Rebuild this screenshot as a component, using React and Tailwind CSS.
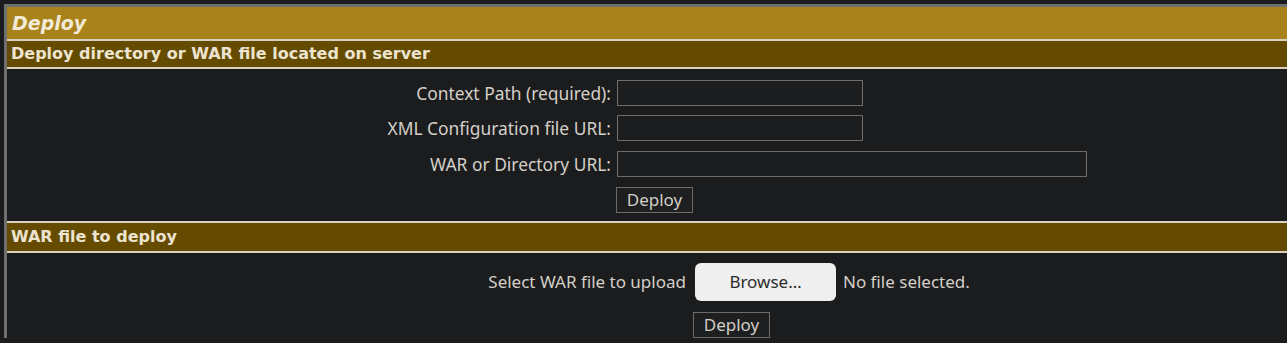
import React from "react";

function Btn({ children }) {
  return (
    <button className="h-[26px] w-[77px] border border-[#6b6b6b] bg-[#1e1f21] text-[17px] text-[#d2cec6] leading-none">
      {children}
    </button>
  );
}

function Field({ w }) {
  return <div className={`h-[26px] ${w} border border-[#6e6e6e] bg-[#1c1d1f]`} />;
}

export default function App() {
  return (
    <div className="h-[343px] w-[1287px] overflow-hidden bg-[#1b1c1e] pt-[4px] pl-[4px] [font-family:'Noto_Sans',sans-serif]">
      <div className="w-[1300px] border-l-[3px] border-t-[3px] border-[#6f6f6f] text-[#d4d0c8]">
        <div className="h-[32px] bg-[#a8821a] pl-[5px] flex items-center">
          <span className="text-[19px] font-bold italic text-[#f2ead6] [font-family:'DejaVu_Sans',sans-serif]">Deploy</span>
        </div>
        <div className="border-y-2 border-[#d8d1c1] h-[30px] bg-[#654b00] pl-[4px] flex items-center">
          <span className="text-[16px] font-bold text-[#ece4d0] [font-family:'DejaVu_Sans',sans-serif]">Deploy directory or WAR file located on server</span>
        </div>
        <div className="grid grid-cols-[604px_1fr] gap-x-[6px] pt-[11px] pb-[8px] text-[17.4px]">
          <div className="h-[26px] flex items-center justify-end">Context Path (required):</div>
          <div className="h-[26px]"><Field w="w-[246px]" /></div>
          <div className="mt-[9px] h-[26px] flex items-center justify-end">XML Configuration file URL:</div>
          <div className="mt-[9px] h-[26px]"><Field w="w-[246px]" /></div>
          <div className="mt-[10px] h-[26px] flex items-center justify-end">WAR or Directory URL:</div>
          <div className="mt-[10px] h-[26px]"><Field w="w-[470px]" /></div>
          <div className="mt-[9px]" />
          <div className="mt-[9px] -ml-[1px]"><Btn>Deploy</Btn></div>
        </div>
        <div className="border-y-2 border-[#d8d1c1] h-[32px] bg-[#654b00] pl-[4px] flex items-center">
          <span className="text-[16px] font-bold text-[#ece4d0] [font-family:'DejaVu_Sans',sans-serif]">WAR file to deploy</span>
        </div>
        <div className="grid grid-cols-[679px_1fr] gap-x-[7px] pt-[10px] text-[17px]">
          <div className="h-[38px] flex items-center justify-end">Select WAR file to upload</div>
          <div className="h-[38px] flex items-center">
            <span className="ml-[2px] h-[38px] w-[141px] rounded-[6px] bg-[#efefef] text-[#2b2b2b] flex items-center justify-center">Browse…</span>
            <span className="ml-[7px]">No file selected.</span>
          </div>
          <div className="mt-[11px]" />
          <div className="mt-[11px]"><Btn>Deploy</Btn></div>
        </div>
      </div>
    </div>
  );
}
